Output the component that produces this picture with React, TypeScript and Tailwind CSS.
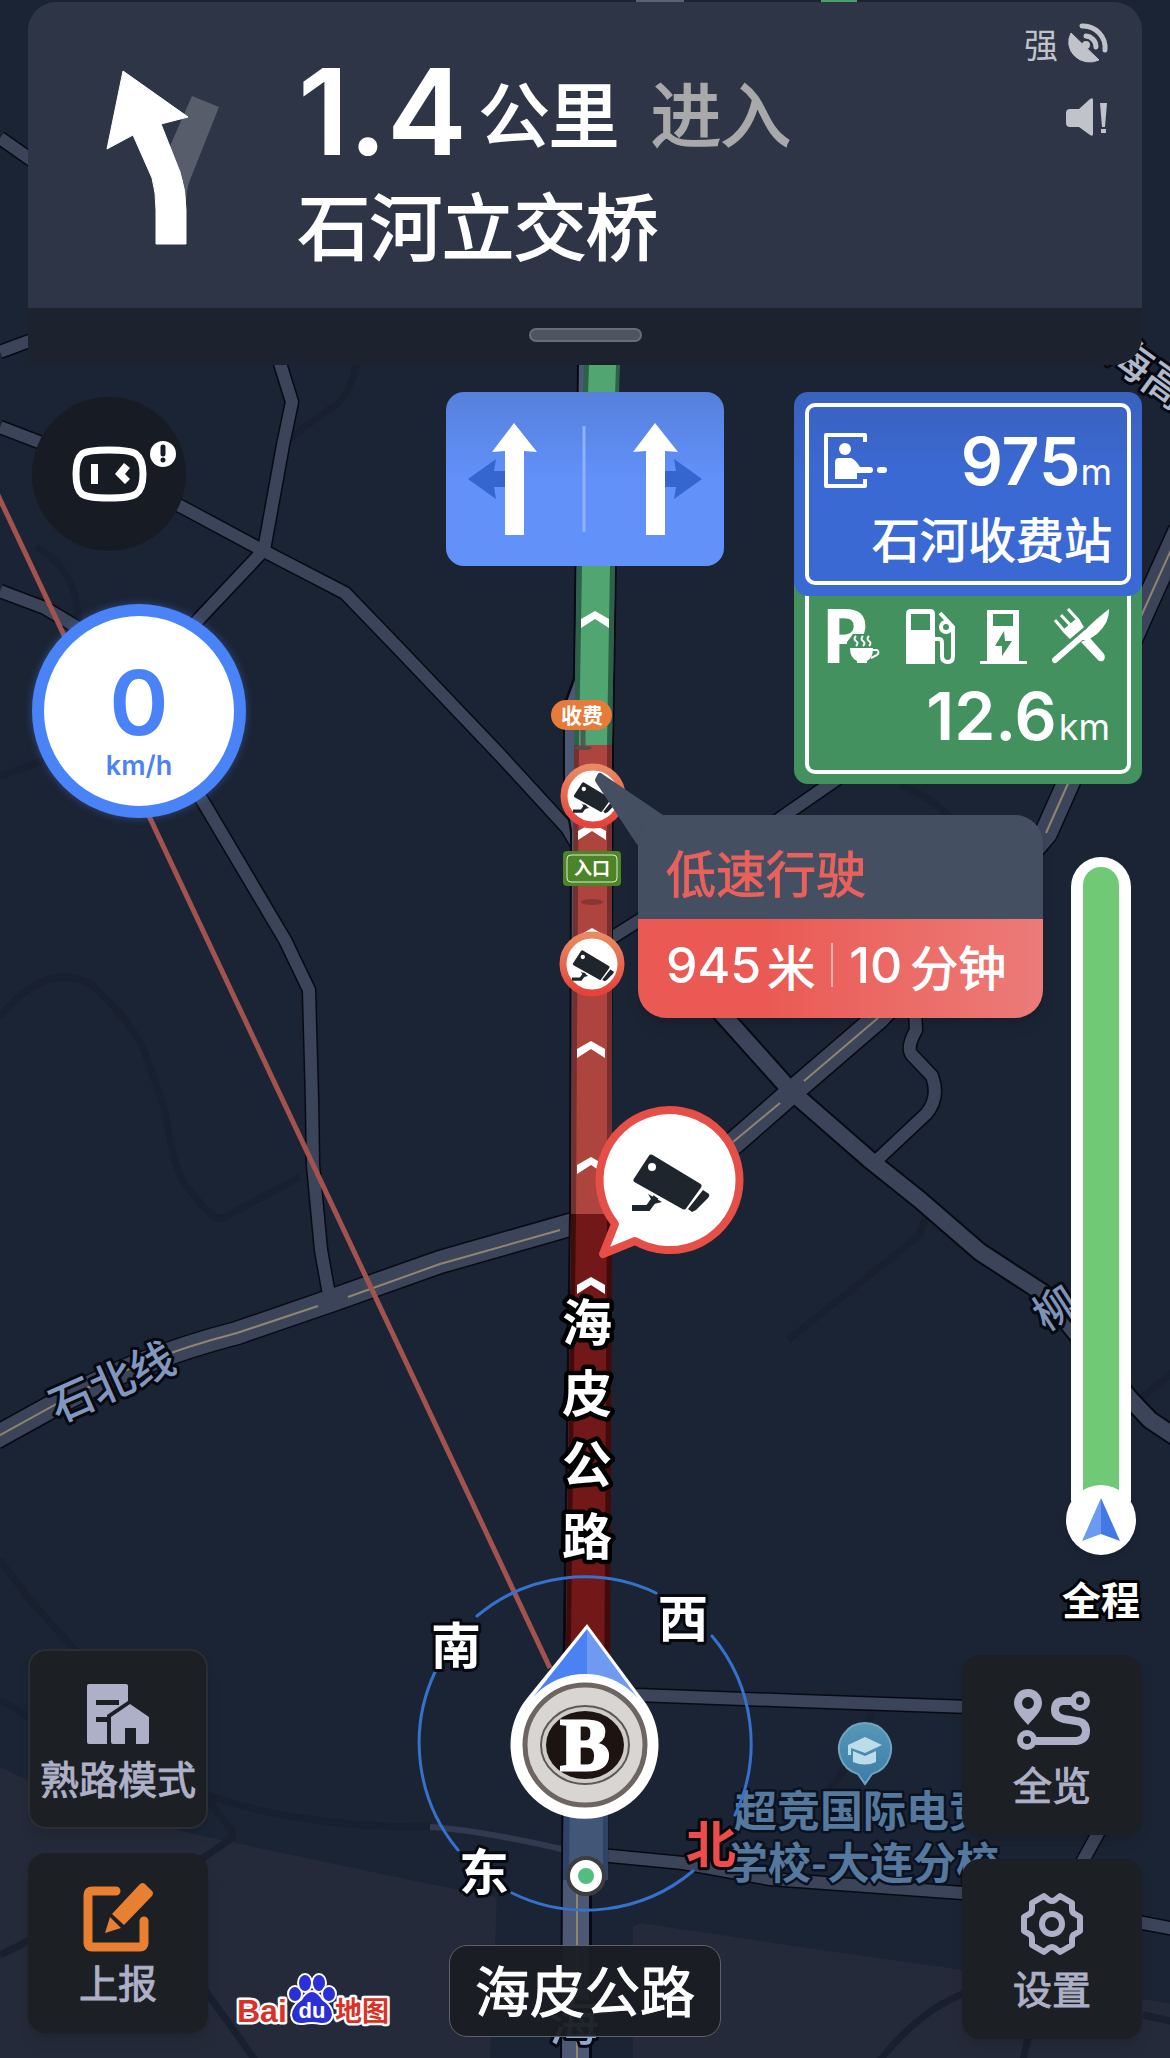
import React from "react";

const NIGHT_ROADS = [
  "M0 427 L60 450 L182 507 L262 550 L345 593 L400 650 L500 755 L567 828 L580 850",
  "M279 360 L292 402 L283 445 L264 550 L198 620 L140 700 L205 805 L285 940 L309 990 L312 1100 L313 1165 L321 1250 L330 1300",
  "M0 591 L45 608 L90 635",
  "M600 945 L640 920 L785 815 L850 770",
  "M0 138 L40 166",
  "M0 352 L40 337",
  "M915 1010 L916 1030 Q906 1048 912 1055 L932 1076 Q940 1098 926 1114 L877 1160",
  "M636 1695 L800 1701 L970 1707",
  "M600 1855 L683 1863 L770 1879 L963 1893 L1143 1923 L1180 1930",
  "M1080 1866 L1102 1826",
];

const WIDE_ROADS = [
  "M-5 1438 L60 1402 Q140 1358 237 1333 L330 1301 L440 1262 L580 1222",
  "M600 1240 L735 1142 L792 1092 L878 1018 L980 910 L1046 833 L1074 770 L1143 612 L1180 530",
];

const MID_ROADS = [
  "M715 1006 L792 1092 L870 1160 L920 1200 L980 1252 L1043 1293 L1131 1400 L1150 1420 L1180 1440",
];

const FAINT_ROADS = [
  "M357 360 Q350 400 328 410 L290 438",
  "M36 547 Q78 570 78 620",
  "M0 776 L60 755",
  "M0 1017 Q45 960 92 985 Q130 1020 144 1050 L165 1110 Q175 1180 190 1190 Q215 1225 225 1217 L300 1177",
  "M788 1340 L920 1235 L930 1205",
  "M0 1560 L30 1600 L75 1650",
  "M0 1700 L30 1718",
  "M207 1795 Q300 1828 430 1827",
  "M207 1800 L232 1830 L232 1838 L200 1860",
  "M0 1955 L30 1940",
  "M205 1990 L255 2060",
  "M872 1712 L860 1745 L830 1790",
  "M880 2060 Q920 2010 965 1993",
  "M1023 2060 L1030 2030",
  "M1143 2015 L1175 2022",
  "M900 785 Q940 800 960 830",
  "M1130 1408 L1175 1370",
];

const CHEVRONS = [
  [595, 611],
  [592, 823],
  [592, 928],
  [591, 1041],
  [591, 1157],
  [591, 1277],
];

function CameraGlyph() {
  return (
    <g>
      <path
        d="M-18 -23 L30 6 L15 27 L-33 0 Z"
        fill="#1f252d"
        stroke="#1f252d"
        strokeWidth="5"
        strokeLinejoin="round"
      />
      <path d="M34 10 L40 14 Q41 16 39 18 L27 30 L23 32 L19 29 Z" fill="#1f252d" />
      <path d="M-37 28 H-21 L-13 17" fill="none" stroke="#1f252d" strokeWidth="6" />
      <path d="M-21 14 L-7 22 L-15 24 Z" fill="#1f252d" />
      <circle cx="-17" cy="-13" r="4" fill="#fff" />
    </g>
  );
}

function SmallCamera({ x, y }: { x: number; y: number }) {
  return (
    <g transform={`translate(${x} ${y})`}>
      <circle r="29" fill="#fff" stroke="url(#ring)" strokeWidth="7" />
      <g transform="scale(0.54)">
        <CameraGlyph />
      </g>
    </g>
  );
}

function NightMap() {
  return (
    <svg
      className="absolute inset-0 h-full w-full font-['Noto_Sans_CJK_SC',sans-serif] font-medium"
      viewBox="0 0 1170 2058"
      preserveAspectRatio="xMidYMin slice"
      aria-label="导航地图"
    >
      <defs>
        <linearGradient id="ring" x1="0" y1="0" x2="0" y2="1">
          <stop offset="0" stopColor="#ea8a63" />
          <stop offset="1" stopColor="#e5423b" />
        </linearGradient>
        <linearGradient id="poi" x1="0" y1="0" x2="0" y2="1">
          <stop offset="0" stopColor="#5797b7" />
          <stop offset="1" stopColor="#3b7ca8" />
        </linearGradient>
      </defs>

      <path d="M0 1767 L83 1807 L207 1837 L430 1884 L497 1897 L490 2060 H0 Z" fill="#242a39" />
      <path d="M633 1927 L640 1923 L800 1947 L963 1970 L1180 2005 V2060 H633 Z" fill="#242a39" />

      <g fill="none" strokeLinejoin="round">
        {FAINT_ROADS.map((d) => (
          <path key={d} d={d} stroke="#181f2f" strokeWidth="7" />
        ))}
        {NIGHT_ROADS.map((d) => (
          <path key={d} d={d} stroke="#070a12" strokeWidth="15" />
        ))}
        {MID_ROADS.map((d) => (
          <path key={d} d={d} stroke="#070a12" strokeWidth="20" />
        ))}
        {WIDE_ROADS.map((d) => (
          <path key={d} d={d} stroke="#070a12" strokeWidth="25" />
        ))}
        {NIGHT_ROADS.map((d) => (
          <path key={d} d={d} stroke="#3c445a" strokeWidth="12" />
        ))}
        {MID_ROADS.map((d) => (
          <path key={d} d={d} stroke="#3c445a" strokeWidth="16" />
        ))}
        {WIDE_ROADS.map((d) => (
          <path key={d} d={d} stroke="#3c445a" strokeWidth="22" />
        ))}
        <path d="M430 1827 Q480 1830 570 1851" stroke="#333a4f" strokeWidth="6" />
        <g stroke="#8e8670" strokeWidth="2">
          <path d="M-5 1438 L60 1402 Q140 1358 237 1333 L318 1306" />
          <path d="M348 1297 L440 1264 L560 1230" />
          <path d="M733 1142 L780 1103" />
          <path d="M804 1081 L878 1018" />
          <path d="M1046 833 L1074 770 L1143 612 L1180 530" />
        </g>
        <path d="M636 1 H684" stroke="#5a6176" strokeWidth="4" />
        <path d="M821 1 H857" stroke="#4f9f6c" strokeWidth="4" />
        <path d="M-3 493 L550 1668" stroke="#a3534f" strokeWidth="5" />
      </g>

      {/* 主路与路况 */}
      <path d="M577 365 L573 678 L563 705 L563 790 L570 832 L569 1214 L562 1700 L560 2060 H592 V1880 H608 L614 745 L620 365 Z" fill="#070a12" />
      <path d="M579 365 L575 680 L565 707 L565 790 L572 830 L571 1214 L563 1875 L562 2060 H589 V1875 L612 745 L618 365 Z" fill="#4c5874" />
      <path d="M577 1890 V2060" stroke="#8e8670" strokeWidth="2" />
      <path d="M584 365 H620 L615 566 L612 745 H574 L577 566 Z" fill="#2b6248" />
      <path d="M589 365 H616 L610 566 L607 745 H579 L582 566 Z" fill="#51a570" />
      <path d="M574 745 H612 V1214 H571 L572 1040 Z" fill="#74302f" />
      <path d="M579 745 H607 V1214 H576 L577 1040 Z" fill="#ad443e" />
      <path d="M571 1214 H612 L610 1720 H565 Z" fill="#410b0c" />
      <path d="M576 1214 H607 L604 1720 H570 Z" fill="#731818" />
      <path d="M564 1780 H608 V1880 H563 Z" fill="#2f4366" />
      <path d="M570 1780 H603 V1880 H569 Z" fill="#425678" />
      {CHEVRONS.map(([x, y]) => (
        <path
          key={y}
          d={`M${x - 14} ${y + 8} L${x} ${y} L${x + 14} ${y + 8} V${y + 17} L${x} ${y + 8} L${x - 14} ${y + 17} Z`}
          fill="#fff"
        />
      ))}

      {/* 收费站与入口 */}
      <path d="M583 730 V748" stroke="#4b5c52" strokeWidth="5" />
      <ellipse cx="583" cy="748" rx="9" ry="2" fill="#5b4a45" />
      <rect x="551" y="700" width="61" height="30" rx="15" fill="#e77b39" />
      <text x="582" y="723" fontSize="21" fontWeight="700" fill="#fff" textAnchor="middle">收费</text>
      <ellipse cx="592" cy="902" rx="11" ry="3" fill="#8a3531" />
      <SmallCamera x={593} y={796} />
      <SmallCamera x={592} y={964} />
      <rect x="563" y="851" width="58" height="35" rx="4" fill="#4d8427" />
      <rect x="567" y="855" width="50" height="27" rx="4" fill="none" stroke="#dfe9d6" strokeWidth="1" />
      <text x="592" y="875" fontSize="18" fontWeight="700" fill="#fff" textAnchor="middle">入口</text>

      <g transform="translate(669 1180)">
        <path
          d="M-54 44 A70 70 0 1 1 -34 61 L-66 74 Z"
          fill="#fff"
          stroke="#e54f47"
          strokeWidth="8"
          strokeLinejoin="round"
        />
        <CameraGlyph />
      </g>

      {/* 路名 */}
      <g textAnchor="middle" stroke="#060910" strokeWidth="6" strokeLinejoin="round" paintOrder="stroke">
        <text x="1148" y="388" fontSize="44" fill="#b0b8ca" transform="rotate(36 1148 373)">海高</text>
        <text x="112" y="1398" fontSize="44" fill="#8297bf" transform="rotate(-24 112 1382)">石北线</text>
        <text x="1055" y="1323" fontSize="42" fill="#7f93b8" transform="rotate(-33 1055 1308)">柳</text>
        <text x="574" y="2041" fontSize="50" fill="#93a5d2">海</text>
      </g>
      <g fontSize="50" fontWeight="700" fill="#fff" textAnchor="middle" stroke="#000" strokeWidth="9" strokeLinejoin="round" paintOrder="stroke">
        <text x="587" y="1341">海</text>
        <text x="587" y="1412">皮</text>
        <text x="587" y="1483">公</text>
        <text x="587" y="1555">路</text>
      </g>

      {/* 兴趣点 */}
      <g fontSize="43" fontWeight="700" fill="#55789c" stroke="#0a1220" strokeWidth="5" strokeLinejoin="round" paintOrder="stroke">
        <text x="734" y="1827">超竞国际电竞</text>
        <text x="725" y="1879">学校-大连分校</text>
      </g>
      <path d="M858 1774 L865 1784 L872 1774 A26 26 0 1 0 858 1774 Z" fill="url(#poi)" stroke="#6fa5c0" strokeWidth="2" />
      <path d="M865 1737 L882 1745 L865 1753 L851 1748 V1755 H848 V1745 Z" fill="#bcdcea" />
      <path d="M853 1751 L865 1756 L876 1751 V1762 Q865 1767 853 1762 Z" fill="#bcdcea" />

      {/* 罗盘 */}
      <g fill="none" stroke="#3671cb" strokeWidth="3" strokeLinecap="round">
        <path d="M477 1616 A167 167 0 0 1 656 1593" />
        <path d="M712 1636 A167 167 0 0 1 735 1815" />
        <path d="M693 1871 A167 167 0 0 1 512 1893" />
        <path d="M458 1850 A167 167 0 0 1 435 1672" />
      </g>
      <g fontSize="50" fontWeight="700" fill="#fff" textAnchor="middle" stroke="#060910" strokeWidth="6" strokeLinejoin="round" paintOrder="stroke">
        <text x="456" y="1664">南</text>
        <text x="683" y="1637">西</text>
        <text x="484" y="1891">东</text>
        <text x="711" y="1863" fill="#ee4b4b">北</text>
      </g>

      {/* 起点与车标 */}
      <circle cx="586" cy="1876" r="18" fill="#fff" stroke="#3c3d3f" strokeWidth="4" />
      <circle cx="586" cy="1876" r="8" fill="#53bd80" />
      <path d="M587 1624 L641 1697 A74 74 0 1 1 528 1697 Z" fill="#fff" />
      <path d="M587 1629 L534 1696 H587 Z" fill="#4a82f4" />
      <path d="M587 1629 L637 1697 H587 Z" fill="#7099f1" />
      <circle cx="585" cy="1744" r="70" fill="#fff" />
      <circle cx="585" cy="1745" r="60" fill="#d9d5d2" stroke="#6d6562" strokeWidth="5" />
      <ellipse cx="585" cy="1745" rx="44" ry="39" fill="#cfcbc8" stroke="#5f5754" strokeWidth="2" />
      <ellipse cx="585" cy="1745" rx="39" ry="34" fill="#1d1311" />
      <text
        x="585"
        y="1770"
        className="font-['Liberation_Serif',serif]"
        fontSize="74"
        fontWeight="700"
        fill="#fff"
        stroke="#fff"
        strokeWidth="3"
        textAnchor="middle"
      >
        B
      </text>
    </svg>
  );
}

function TurnHeader() {
  return (
    <header className="relative mx-7 mt-0.5">
      <div className="flex h-[306px] items-start rounded-t-[28px] bg-[#2d3546] pt-[50px] pr-8">
        <svg className="mt-4 ml-[75px] h-[182px] w-[120px] shrink-0" viewBox="104 68 120 182">
          <path d="M193 96 L220 107 L191 180 Q187 190 187 205 L168 153 Z" fill="#585d6b" />
          <path
            d="M124 71 L189 117 L162 124 L181 172 Q187 190 187 210 V244 H157 V210 Q157 192 153 178 L134 135 L108 149 Z"
            fill="#fff"
            stroke="#fff"
            strokeLinejoin="round"
          />
        </svg>
        <div className="ml-[75px] flex flex-1 flex-col gap-3">
          <div className="flex h-[120px] items-center text-[70px] leading-none text-white">
            <span className="font-['Inter',sans-serif] text-[120px] font-semibold">1.4</span>
            <span className="ml-3 [-webkit-text-stroke:2px_#ffffff]">公里</span>
            <span className="ml-8 text-[#a9a9a9] [-webkit-text-stroke:2px_#a9a9a9]">进入</span>
          </div>
          <div className="text-[72px] leading-[78px] text-white [-webkit-text-stroke:2px_#ffffff]">石河立交桥</div>
        </div>
        <div className="-mt-[30px] flex flex-col items-end gap-[30px] text-[#c0c3ca]">
          <div className="flex items-center gap-2">
            <span className="text-[34px] leading-[40px]">强</span>
            <svg className="h-11 w-11" viewBox="0 0 44 44" fill="currentColor">
              <path d="M5 11 L33 38 A21 20 0 0 1 5 11 Z" stroke="currentColor" strokeLinejoin="round" />
              <circle cx="20" cy="23" r="4" />
              <path
                d="M16 4 A22 22 0 0 1 39 28 M20 14 A11 11 0 0 1 30 25"
                fill="none"
                stroke="currentColor"
                strokeWidth="5"
                strokeLinecap="round"
              />
            </svg>
          </div>
          <svg className="h-11 w-11" viewBox="0 0 44 44" fill="currentColor">
            <path d="M4 13 H13 L24 3 Q27 1 27 4 V38 Q27 41 24 39 L13 31 H4 Q0 31 0 27 V17 Q0 13 4 13 Z" />
            <path d="M34 7 H41 L39 31 H36 Z M35 33 H40 V37 H35 Z" />
          </svg>
        </div>
      </div>
      <div className="flex h-[57px] items-center justify-center rounded-br-[28px] bg-[#1d222f] pb-1">
        <div className="h-3.5 w-[113px] rounded-full border-2 border-[#686d7a] bg-[#4f5462]" />
      </div>
    </header>
  );
}

function AssistantButton() {
  return (
    <button
      type="button"
      aria-label="语音助手"
      className="ml-1 flex size-[154px] items-center justify-center rounded-full bg-[#171b24]"
    >
      <svg className="h-[64px] w-[114px]" viewBox="52 443 114 64">
        <path
          d="M109 451 Q130 451 136 455 Q143 460 143 475 Q143 490 136 495 Q130 499 109 499 Q88 499 82 495 Q76 490 76 475 Q76 460 82 455 Q88 451 109 451 Z"
          fill="none"
          stroke="#fff"
          strokeWidth="7"
        />
        <path d="M91 465 H98 V485 H91 Z" fill="#fff" />
        <path d="M124 464 L130 469 L125 475 L130 480 L125 485 L115 475 Z" fill="#fff" />
      </svg>
    </button>
  );
}

function SpeedDial() {
  return (
    <div className="ml-1 flex size-[214px] flex-col items-center rounded-full border-[12px] border-[#4a83f7] bg-white pt-10 font-['Inter','Liberation_Sans',sans-serif] text-[#4a83f7] shadow-[0_0_8px_#4a83f766]">
      <span className="text-[90px] leading-[94px] font-semibold">0</span>
      <span className="text-[27px] leading-8 font-semibold">km/h</span>
    </div>
  );
}

function LanePanel() {
  return (
    <div className="flex h-[174px] w-[278px] items-center justify-center rounded-[18px] bg-linear-to-b from-[#5680dc] to-[#6191f9] to-50%">
      <svg className="h-[120px] w-[240px]" viewBox="465 419 240 120">
        <path d="M468 479 L496 459 L494 471 H506 V487 H494 L496 499 Z" fill="#3566cf" />
        <path d="M702 479 L674 459 L676 471 H664 V487 H676 L674 499 Z" fill="#3566cf" />
        <path d="M514 423 L537 452 L524 451 V535 H505 V451 L492 452 Z" fill="#fff" />
        <path d="M655 423 L678 452 L665 451 V535 H646 V451 L633 452 Z" fill="#fff" />
        <path d="M584 426 V532" stroke="#8fb1fb" strokeWidth="3" />
      </svg>
    </div>
  );
}

function TollIcon() {
  return (
    <svg className="h-14 w-16" viewBox="0 0 64 56" fill="#fff">
      <path d="M41 9 V2 H2 V53 H41 V46" fill="none" stroke="#fff" strokeWidth="4" strokeLinejoin="round" />
      <circle cx="21" cy="16" r="6" />
      <path d="M15 25 H27 Q31 26 36 34 H46 Q49 34 49 37 Q49 40 46 40 H33 V46 H11 V29 Q11 25 15 25 Z" />
      <rect x="53" y="34" width="10" height="6" rx="3" />
    </svg>
  );
}

function ServiceIcons() {
  return (
    <div className="flex justify-between">
      <svg className="h-14 w-14" viewBox="0 0 56 56" fill="#fff">
        <text x="-5" y="55" className="font-['Open_Sans',sans-serif]" fontSize="76" fontWeight="700">P</text>
        <path d="M21 34 L27 26 H56 V56 H21 Z" fill="#43915f" />
        <path d="M24 40 H47 Q47 50 41 53 V55 H31 V53 Q24 50 24 40 Z" />
        <path
          d="M46 42 H51 Q54 44 51 47 L45 50 M30 28 q-3 3 0 5 t0 5 M37 28 q-3 3 0 5 t0 5 M43 28 q-3 3 0 5 t0 5"
          fill="none"
          stroke="#fff"
          strokeWidth="2"
        />
      </svg>
      <svg className="h-14 w-[50px]" viewBox="0 0 50 56" fill="#fff">
        <path d="M0 56 V6 Q0 1 5 1 H24 Q29 1 29 6 V56 Z" />
        <path d="M5 6 H24 V22 H5 Z" fill="#43915f" />
        <path
          d="M29 31 H33 Q36 31 36 35 V48 Q36 54 42 54 Q47 54 47 48 V19 L34 5"
          fill="none"
          stroke="#fff"
          strokeWidth="4"
        />
        <circle cx="40" cy="19" r="5" fill="#43915f" stroke="#fff" strokeWidth="4" />
      </svg>
      <svg className="h-14 w-12" viewBox="0 0 48 56" fill="#fff">
        <path d="M7 2 H39 V53 H47 V56 H0 V53 H7 Z" />
        <path d="M13 6 H33 V18 H13 Z M24 23 L15 38 H22 L22 48 L32 33 H25 Z" fill="#43915f" />
      </svg>
      <svg className="h-14 w-[58px]" viewBox="0 0 58 56" fill="#fff">
        <path d="M3 52 L34 25" stroke="#fff" strokeWidth="6" strokeLinecap="round" />
        <path d="M57 1 Q58 14 45 26 L36 32 L27 32 Q30 22 57 1 Z" />
        <path d="M29 34 L38 30 L52 46 Q54 50 51 53 Q48 54 46 52 Z" />
        <path d="M3 12 L13 24 L18 29 L30 19 L26 12 L16 1" fill="none" stroke="#fff" strokeWidth="3" />
        <path d="M9 7 L21 20" stroke="#fff" strokeWidth="3" />
        <path d="M12 21 L25 10 L30 18 L19 29 Z" />
      </svg>
    </div>
  );
}

function SignBoard() {
  return (
    <div className="w-[348px] text-white">
      <section className="relative h-[204px] rounded-[14px] bg-linear-to-b from-[#3a61bd] to-[#3b69d3] to-40% p-[11px]">
        <div className="h-full rounded-[10px] border-4 border-white pr-[15px] pl-[15px]">
          <div className="flex h-[92px] items-end justify-between">
            <div className="pb-2.5">
              <TollIcon />
            </div>
            <p className="font-['Inter',sans-serif]">
              <span className="text-[66px] leading-[60px] font-semibold">975</span>
              <span className="text-[36px]">m</span>
            </p>
          </div>
          <p className="mt-2.5 text-right text-[48px] leading-[56px] [-webkit-text-stroke:1px_#ffffff]">石河收费站</p>
        </div>
      </section>
      <section className="-mt-5 h-[208px] rounded-b-[14px] bg-[#43915f] px-[11px] pb-2.5">
        <div className="flex h-full flex-col rounded-b-[10px] border-4 border-t-0 border-white px-[17px] pt-8">
          <ServiceIcons />
          <p className="mt-[18px] text-right font-['Inter',sans-serif]">
            <span className="text-[66px] leading-[68px] font-semibold">12.6</span>
            <span className="ml-0.5 text-[36px]">km</span>
          </p>
        </div>
      </section>
    </div>
  );
}

function SlowTrafficCallout() {
  return (
    <div className="absolute top-[815px] left-1/2 ml-[53px] w-[405px]">
      <svg className="absolute -top-11 -left-11 h-[76px] w-[72px]" viewBox="594 771 72 76">
        <path d="M600 776 L662 818 V847 L639 842 L598 780 Z" fill="#454f62" stroke="#454f62" strokeWidth="6" strokeLinejoin="round" />
      </svg>
      <div className="relative overflow-hidden rounded-[28px] shadow-lg">
        <div className="bg-[#454f62] px-7 pt-5 pb-3 text-[50px] leading-[72px] text-[#ea615c] [-webkit-text-stroke:1px_#ea615c]">
          低速行驶
        </div>
        <div className="flex h-[99px] items-center bg-linear-to-r from-[#ea5953] from-30% to-[#ec7b79] pb-2 pl-7 text-[48px] leading-none text-white">
          <span className="font-['Inter',sans-serif] text-[50px] font-medium">945</span>
          <span className="ml-1.5 [-webkit-text-stroke:1px_#ffffff]">米</span>
          <span className="mx-4 h-11 w-0.5 bg-white/50" />
          <span className="font-['Inter',sans-serif] text-[50px] font-medium">10</span>
          <span className="ml-2 [-webkit-text-stroke:1px_#ffffff]">分钟</span>
        </div>
      </div>
    </div>
  );
}

function RouteProgress() {
  return (
    <div className="flex w-[82px] flex-1 flex-col items-center">
      <div className="flex w-[60px] flex-1 flex-col rounded-t-full bg-white px-3 pt-2.5">
        <div className="flex-1 rounded-t-full bg-[#70c974]" />
      </div>
      <div className="relative -mt-4 flex size-[70px] items-center justify-center rounded-full bg-white shadow-md">
        <svg className="h-11 w-10" viewBox="0 0 40 44">
          <path d="M20 0 L1 43 L20 36 Z" fill="#6c9af0" />
          <path d="M20 0 L39 43 L20 36 Z" fill="#4379e6" />
        </svg>
      </div>
      <svg className="mt-3.5 h-[60px] w-[90px] shrink-0" viewBox="0 0 90 60">
        <text
          x="45"
          y="46"
          fontSize="39"
          fontWeight="700"
          fill="#fff"
          stroke="#000"
          strokeWidth="6"
          strokeLinejoin="round"
          paintOrder="stroke"
          textAnchor="middle"
        >
          全程
        </text>
      </svg>
    </div>
  );
}

function MapButton({ label, outlined, children }: { label: string; outlined?: boolean; children: React.ReactNode }) {
  return (
    <button
      type="button"
      className={`flex size-[180px] flex-col items-center rounded-[18px] border-2 bg-[#1c1f23] pt-7 text-[#adb0c6] shadow-lg ${
        outlined ? "border-[#2b2e33]" : "border-transparent"
      }`}
    >
      {children}
      <span className="mt-1 text-[39px] leading-[48px] whitespace-nowrap [-webkit-text-stroke:1px_#adb0c6]">{label}</span>
    </button>
  );
}

function HomeRouteIcon() {
  return (
    <svg className="h-[70px] w-[70px]" viewBox="0 0 70 70" fill="currentColor">
      <path d="M6 5 H43 Q45 5 45 7 V22 L24 36 V65 H6 Q4 65 4 63 V7 Q4 5 6 5 Z" />
      <path d="M13 21 H36 V26 H13 Z M13 38 H24 V43 H13 Z" fill="#1c1f23" />
      <path d="M47 25 L66 38 V63 Q66 65 64 65 H53 V49 H42 V65 H30 Q28 65 28 63 V38 Z" />
    </svg>
  );
}

function ReportIcon() {
  return (
    <svg className="h-[70px] w-[70px]" viewBox="0 0 70 70" fill="#e87f31">
      <path
        d="M33 8 H9 Q5 8 5 12 V60 Q5 64 9 64 H57 Q61 64 61 60 V38"
        fill="none"
        stroke="#e87f31"
        strokeWidth="9"
        strokeLinecap="round"
      />
      <path d="M57 1 Q60 -1 62 1 L69 8 Q71 10 69 13 L41 42 L29 31 Z" />
      <path d="M27 34 L38 45 L22 50 Z" />
    </svg>
  );
}

function OverviewIcon() {
  return (
    <svg className="h-[70px] w-[80px]" viewBox="0 0 80 70" fill="none" stroke="currentColor">
      <path d="M16 4 C7 4 2 11 2 18 C2 26 10 33 16 40 C22 33 30 26 30 18 C30 11 25 4 16 4 Z M16 12 A6 6 0 1 1 16 24 A6 6 0 1 1 16 12 Z" fill="currentColor" fillRule="evenodd" stroke="none" />
      <circle cx="15" cy="55" r="7" strokeWidth="6" />
      <circle cx="68" cy="16" r="7" strokeWidth="6" />
      <path d="M24 56 H64 Q74 55 74 46 Q74 37 64 36 L52 34 Q43 32 43 25 Q43 16 52 16 H59" strokeWidth="8" />
    </svg>
  );
}

function SettingsIcon() {
  return (
    <svg className="h-[70px] w-[70px]" viewBox="0 0 70 70" fill="none" stroke="currentColor" strokeWidth="6" strokeLinejoin="round">
      <path d="M27 7 L32 11 Q35 13 38 11 L43 7 L55 14 V20 Q55 24 58 25 L63 28 V42 L58 45 Q55 46 55 50 V56 L43 63 L38 59 Q35 57 32 59 L27 63 L15 56 V50 Q15 46 12 45 L7 42 V28 L12 25 Q15 24 15 20 V14 Z" />
      <circle cx="35" cy="35" r="10" />
    </svg>
  );
}

function BaiduLogo() {
  return (
    <svg className="mb-3 ml-[26px] h-[54px] w-[160px] shrink-0" viewBox="0 0 160 54" aria-label="百度地图">
      <g fontWeight="700" fill="#da3127" stroke="#fff" strokeWidth="5" strokeLinejoin="round" paintOrder="stroke">
        <text x="3" y="49" fontSize="32" className="font-['Liberation_Sans',sans-serif]">Bai</text>
        <text x="101" y="48" fontSize="27">地图</text>
      </g>
      <g fill="#2b2fd6" stroke="#fff" strokeWidth="4" paintOrder="stroke">
        <path d="M78 19 Q83 19 88 27 Q98 34 98 42 Q96 51 87 50 Q78 48 69 50 Q59 51 58 42 Q58 34 68 27 Q73 19 78 19 Z" />
        <ellipse cx="61" cy="21" rx="6" ry="7" />
        <ellipse cx="71" cy="10" rx="6" ry="8" />
        <ellipse cx="85" cy="10" rx="6" ry="8" />
        <ellipse cx="95" cy="21" rx="6" ry="7" />
      </g>
      <text x="78" y="45" fontSize="22" fill="#fff" textAnchor="middle" fontWeight="700" className="font-['Liberation_Sans',sans-serif]">du</text>
    </svg>
  );
}

function App() {
  return (
    <div className="relative flex min-h-screen w-full flex-col overflow-hidden bg-[#1b2434] font-['Noto_Sans_CJK_SC','Inter',sans-serif]">
      <NightMap />
      <TurnHeader />

      <div className="relative grid grid-cols-3 items-start px-7 pt-[27px]">
        <div className="flex flex-col gap-[53px] pt-[5px]">
          <div className="relative w-fit">
            <AssistantButton />
            <svg className="absolute top-[43px] left-[121px] size-7" viewBox="0 0 28 28">
              <circle cx="14" cy="14" r="13" fill="#fff" />
              <path d="M14 7 V14 M14 20 V20" stroke="#171b24" strokeWidth="5" strokeLinecap="round" />
            </svg>
          </div>
          <SpeedDial />
        </div>
        <div className="justify-self-center">
          <LanePanel />
        </div>
        <div className="justify-self-end">
          <SignBoard />
        </div>
      </div>

      <SlowTrafficCallout />

      <div className="relative mt-[39px] mr-7 flex min-h-[600px] flex-1 flex-col self-end">
        <RouteProgress />
      </div>

      <footer className="relative mt-5 grid grid-cols-[1fr_auto_1fr] items-end px-7 pb-[19px]">
        <div className="flex items-end">
          <div className="flex flex-col gap-6 pb-1.5">
            <MapButton label="熟路模式" outlined>
              <HomeRouteIcon />
            </MapButton>
            <MapButton label="上报">
              <ReportIcon />
            </MapButton>
          </div>
          <BaiduLogo />
        </div>
        <div className="mb-0.5 flex h-[92px] w-[272px] items-center justify-center rounded-[18px] border border-[#5c616a] bg-[#1a1e23]/95 pb-1.5 text-[55px] leading-none text-white [-webkit-text-stroke:1px_#ffffff]">
          海皮公路
        </div>
        <div className="flex flex-col gap-6 justify-self-end">
          <MapButton label="全览">
            <OverviewIcon />
          </MapButton>
          <MapButton label="设置">
            <SettingsIcon />
          </MapButton>
        </div>
      </footer>
    </div>
  );
}

export default App;
